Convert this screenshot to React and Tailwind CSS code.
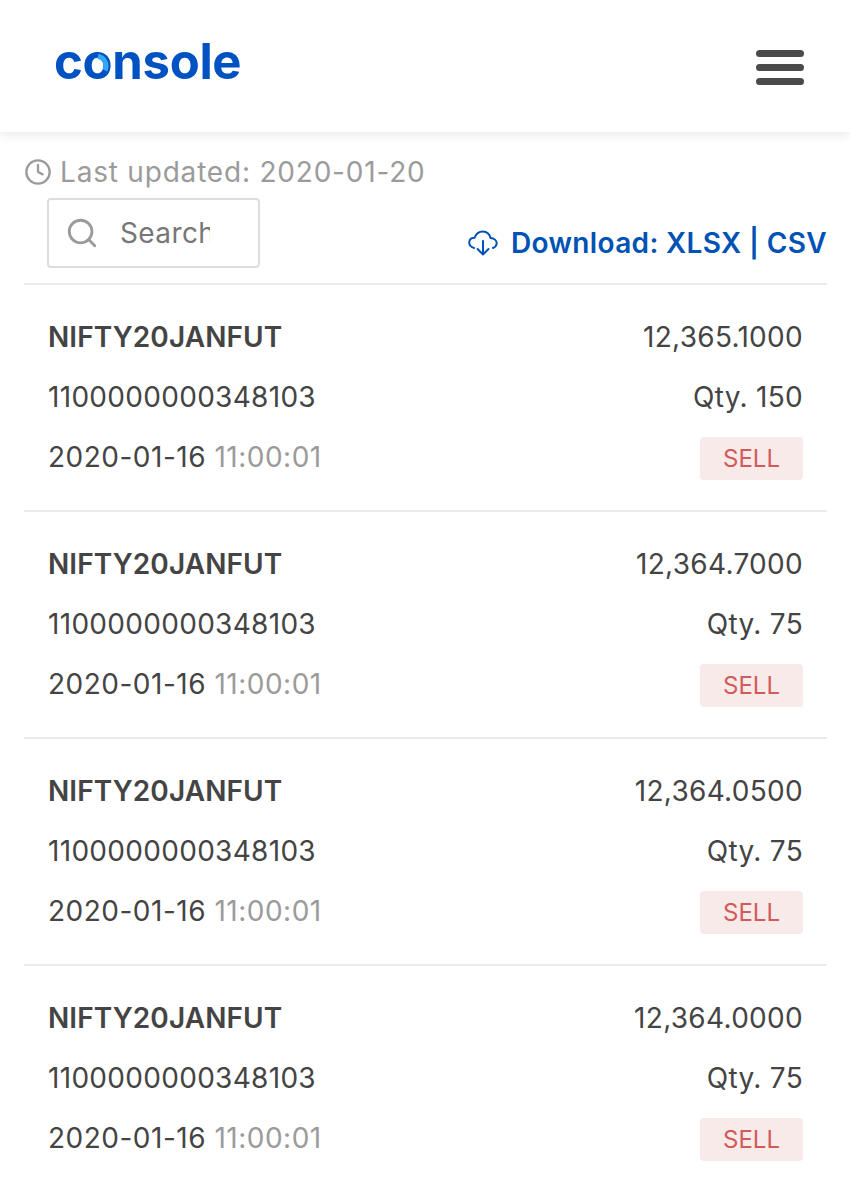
import { Clock, Search } from 'lucide-react'

const trades = [
  { price: '12,365.1000', qty: 150 },
  { price: '12,364.7000', qty: 75 },
  { price: '12,364.0500', qty: 75 },
  { price: '12,364.0000', qty: 75 },
]

function Logo() {
  return (
    <div className="relative w-[186px] text-[49px] leading-[60px] font-bold tracking-[-0.3px] text-[#0052c2]">
      console
      <svg className="absolute left-[27px] top-[18px]" width="30" height="30" viewBox="0 0 30 30" fill="none">
        <path d="M17 6.2 A 10 10 0 0 1 24 20.4" stroke="#36a9f5" strokeWidth="5" />
      </svg>
    </div>
  )
}

function TradeRow({ trade }) {
  return (
    <div className="h-[227px] border-t-2 border-[#ebebeb] px-6 pt-[22px] flex justify-between text-[28px] leading-[60px] tracking-[0.3px] text-[#444444]">
      <div>
        <div className="font-semibold tracking-[0.1px]">NIFTY20JANFUT</div>
        <div>1100000000348103</div>
        <div className="tracking-[0.5px]">
          2020-01-16 <span className="text-[#9b9b9b]">11:00:01</span>
        </div>
      </div>
      <div className="flex flex-col items-end">
        <div>{trade.price}</div>
        <div>Qty. {trade.qty}</div>
        <div className="mt-[10px] h-[43px] w-[103px] rounded-[4px] bg-[#f9eaea] text-center text-[24px] leading-[43px] tracking-normal text-[#cf5b5b]">
          SELL
        </div>
      </div>
    </div>
  )
}

export default function App() {
  return (
    <div className="w-[850px] h-[1200px] overflow-hidden bg-white font-['Inter',sans-serif]">
      <header className="h-[132px] flex items-center justify-between pl-[54px] pr-[46px] shadow-[0_2px_12px_rgba(0,0,0,0.1)]">
        <div className="-mt-[8px]">
          <Logo />
        </div>
        <div className="mt-[3px] flex flex-col gap-[7px]">
          <div className="h-[7px] w-[48px] rounded-full bg-[#4a4a4a]" />
          <div className="h-[7px] w-[48px] rounded-full bg-[#4a4a4a]" />
          <div className="h-[7px] w-[48px] rounded-full bg-[#4a4a4a]" />
        </div>
      </header>

      <div className="pl-6 pr-[23px]">
        <div className="mt-[20px] flex items-center gap-[8px] h-[40px] text-[28px] tracking-[0.8px] text-[#9b9b9b]">
          <Clock size={28} strokeWidth={2} className="shrink-0" />
          <span>Last updated: 2020-01-20</span>
        </div>
        <div className="mt-[6px] h-[85px] flex justify-between">
          <div className="ml-[23px] h-[70px] w-[213px] rounded-[4px] border-2 border-[#dddddd] flex items-center pl-[16px] text-[#9b9b9b] overflow-hidden">
            <Search size={34} strokeWidth={2} className="shrink-0" />
            <span className="ml-[21px] w-[90px] overflow-hidden whitespace-nowrap text-[28px] tracking-[0.4px] text-[#777777]">Search</span>
          </div>
          <div className="mt-[25px] flex items-center h-[40px] text-[28px] tracking-[0.35px] font-semibold text-[#0052b4]">
            <svg className="mr-[13px]" width="30" height="26" viewBox="0 0 30 26" fill="none" stroke="currentColor" strokeWidth="2" strokeLinecap="round" strokeLinejoin="round">
              <path d="M6 18 C 2.5 17 1 14.5 1.3 12 C 1.6 9.5 3.5 7.8 6.5 7.8 C 8 3.5 11.5 1.5 15 1.5 C 19 1.5 22 4.5 22.5 8 C 26 8.3 28.8 10.5 28.7 13.5 C 28.5 15.8 27 17.3 25 18" />
              <path d="M15 11 V 24.5 M 9.5 19 L 15 24.5 L 20.5 19" />
            </svg>
            <span>Download: XLSX | CSV</span>
          </div>
        </div>

        {trades.map((t, i) => (
          <TradeRow key={i} trade={t} />
        ))}
      </div>
    </div>
  )
}
